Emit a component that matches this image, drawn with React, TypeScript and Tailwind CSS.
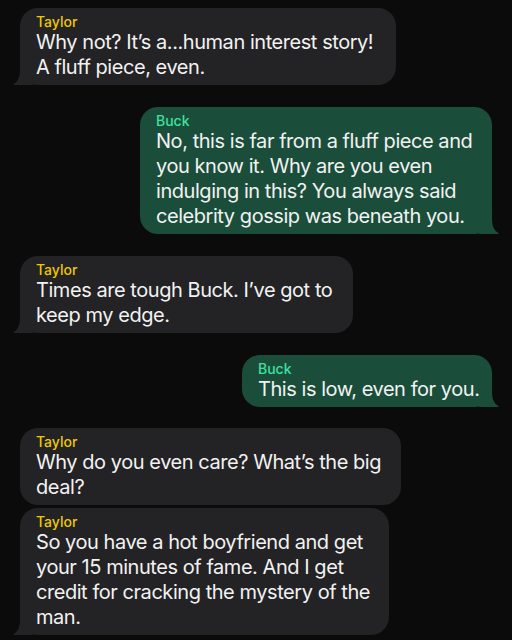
import React from "react";

type Msg = {
  from: "Taylor" | "Buck";
  lines: string[];
  width: number;
  tail?: boolean;
  gap: string;
};

const messages: Msg[] = [
  {
    from: "Taylor",
    lines: ["Why not? It’s a...human interest story!", "A fluff piece, even."],
    width: 376,
    tail: true,
    gap: "mt-[7px]",
  },
  {
    from: "Buck",
    lines: [
      "No, this is far from a fluff piece and",
      "you know it. Why are you even",
      "indulging in this? You always said",
      "celebrity gossip was beneath you.",
    ],
    width: 352,
    tail: true,
    gap: "mt-[22px]",
  },
  {
    from: "Taylor",
    lines: ["Times are tough Buck. I’ve got to", "keep my edge."],
    width: 333,
    tail: true,
    gap: "mt-[22px]",
  },
  {
    from: "Buck",
    lines: ["This is low, even for you."],
    width: 250,
    tail: true,
    gap: "mt-[22px]",
  },
  {
    from: "Taylor",
    lines: ["Why do you even care? What’s the big", "deal?"],
    width: 381,
    gap: "mt-[21px]",
  },
  {
    from: "Taylor",
    lines: [
      "So you have a hot boyfriend and get",
      "your 15 minutes of fame. And I get",
      "credit for cracking the mystery of the",
      "man.",
    ],
    width: 369,
    tail: true,
    gap: "mt-[3px]",
  },
];

const LeftTail = () => (
  <svg
    className="absolute -left-[7px] bottom-0"
    width="20"
    height="20"
    viewBox="0 0 20 20"
  >
    <path d="M7 0 L20 0 L20 20 L4 20 C1 20 0 19.5 0 19.2 C5 17 7 12 7 4 Z" fill="#232325" />
  </svg>
);

const RightTail = () => (
  <svg
    className="absolute -right-[7px] bottom-0"
    width="20"
    height="20"
    viewBox="0 0 20 20"
  >
    <path d="M13 0 L0 0 L0 20 L16 20 C19 20 20 19.5 20 19.2 C15 17 13 12 13 4 Z" fill="#1a4e3b" />
  </svg>
);

const Bubble: React.FC<{ msg: Msg }> = ({ msg }) => {
  const mine = msg.from === "Buck";
  return (
    <div className={`flex ${mine ? "justify-end" : "justify-start"} ${msg.gap}`}>
      <div
        className={`relative rounded-[18px] pl-4 pr-3 pt-[5px] pb-[5px] ${
          mine ? "bg-[#1a4e3b]" : "bg-[#232325]"
        }`}
        style={{ width: msg.width }}
      >
        {msg.tail && (mine ? <RightTail /> : <LeftTail />)}
        <div
          className={`relative text-[14px] leading-[17px] font-medium ${
            mine ? "text-[#3fe0a0]" : "text-[#f0c800]"
          }`}
        >
          {msg.from}
        </div>
        <div className="relative text-[20px] leading-[25px] tracking-[-0.45px] text-[#f2f2f2] whitespace-nowrap">
          {msg.lines.map((l, i) => (
            <div key={i}>{l}</div>
          ))}
        </div>
      </div>
    </div>
  );
};

export default function App() {
  return (
    <div
      className="w-[512px] h-[640px] overflow-hidden bg-[#0b0b0b] px-5"
      style={{ fontFamily: "Inter, 'Noto Sans', sans-serif" }}
    >
      <div className="flex flex-col pt-px">
        {messages.map((m, i) => (
          <Bubble key={i} msg={m} />
        ))}
      </div>
    </div>
  );
}
